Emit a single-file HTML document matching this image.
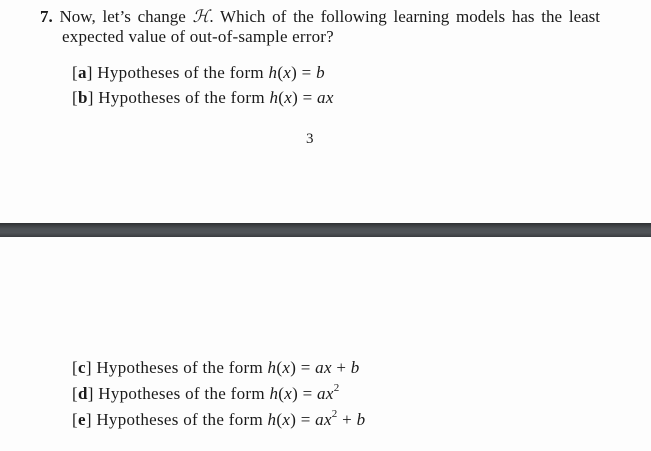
<!DOCTYPE html>
<html><head><style>
body{margin:0;width:651px;height:451px;background:#fdfdfd;position:relative;overflow:hidden;font-family:"Liberation Serif",serif;font-size:17px;color:#1a1a1a}
.l{position:absolute;white-space:nowrap;line-height:20px}
i{font-style:italic}
sup{font-size:11px;line-height:0;position:relative;top:-1px}
.band{position:absolute;left:0;top:223px;width:651px;height:14px;background:linear-gradient(#2e3033,#4d5155 40%,#505357 70%,#3a3c40)}
</style></head><body>
<div class="l" style="left:40px;top:7px;width:560px;text-align:justify;text-align-last:justify"><b>7.</b> Now, let’s change <i>ℋ</i>. Which of the following learning models has the least</div>
<div class="l" style="left:62px;top:27px;letter-spacing:0.2px">expected value of out-of-sample error?</div>
<div class="l" style="left:72px;top:63px;letter-spacing:0.3px">[<b>a</b>] Hypotheses of the form <i>h</i>(<i>x</i>) = <i>b</i></div>
<div class="l" style="left:72px;top:88px;letter-spacing:0.3px">[<b>b</b>] Hypotheses of the form <i>h</i>(<i>x</i>) = <i>ax</i></div>
<div class="l" style="left:306px;top:129px;font-size:15px">3</div>
<div class="band"></div>
<div class="l" style="left:72px;top:358px;letter-spacing:0.3px">[<b>c</b>] Hypotheses of the form <i>h</i>(<i>x</i>) = <i>ax</i> + <i>b</i></div>
<div class="l" style="left:72px;top:384px;letter-spacing:0.3px">[<b>d</b>] Hypotheses of the form <i>h</i>(<i>x</i>) = <i>ax</i><sup>2</sup></div>
<div class="l" style="left:72px;top:410px;letter-spacing:0.3px">[<b>e</b>] Hypotheses of the form <i>h</i>(<i>x</i>) = <i>ax</i><sup>2</sup> + <i>b</i></div>
</body></html>
